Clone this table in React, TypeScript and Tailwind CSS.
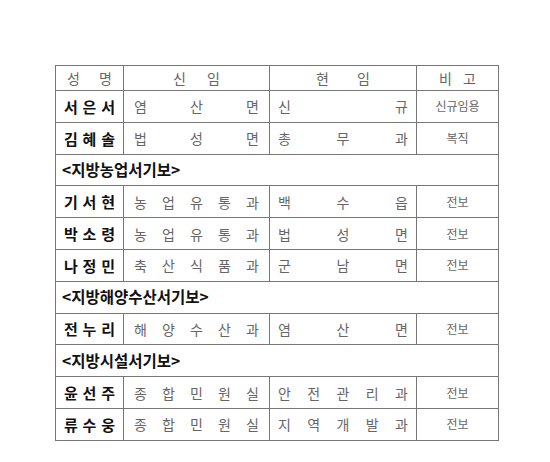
import React from 'react';

type Row =
  | { kind: 'person'; name: string; from: string; to: string; note: string }
  | { kind: 'section'; title: string };

const rows: Row[] = [
  { kind: 'person', name: '서은서', from: '염산면', to: '신규', note: '신규임용' },
  { kind: 'person', name: '김혜솔', from: '법성면', to: '총무과', note: '복직' },
  { kind: 'section', title: '<지방농업서기보>' },
  { kind: 'person', name: '기서현', from: '농업유통과', to: '백수읍', note: '전보' },
  { kind: 'person', name: '박소령', from: '농업유통과', to: '법성면', note: '전보' },
  { kind: 'person', name: '나정민', from: '축산식품과', to: '군남면', note: '전보' },
  { kind: 'section', title: '<지방해양수산서기보>' },
  { kind: 'person', name: '전누리', from: '해양수산과', to: '염산면', note: '전보' },
  { kind: 'section', title: '<지방시설서기보>' },
  { kind: 'person', name: '윤선주', from: '종합민원실', to: '안전관리과', note: '전보' },
  { kind: 'person', name: '류수웅', from: '종합민원실', to: '지역개발과', note: '전보' },
];

function Spread({ text, className }: { text: string; className: string }) {
  return (
    <div className={`flex justify-between ${className}`}>
      {Array.from(text).map((c, i) => (
        <span key={i}>{c}</span>
      ))}
    </div>
  );
}

export default function App() {
  return (
    <div className="w-[550px] h-[462px] bg-white pt-[65px] pl-[55px] font-['Noto_Sans_CJK_KR',sans-serif]">
      <table className="border-collapse border border-[#555] table-fixed w-[443px]">
        <colgroup>
          <col className="w-[68px]" />
          <col className="w-[146px]" />
          <col className="w-[147px]" />
          <col className="w-[82px]" />
        </colgroup>
        <thead>
          <tr className="h-[25px] text-[14px] text-[#666] leading-none">
            <th className="border border-[#777] font-normal">
              <Spread text="성명" className="px-[11px]" />
            </th>
            <th className="border border-[#777] font-normal">
              <Spread text="신임" className="px-[49px]" />
            </th>
            <th className="border border-[#777] font-normal">
              <Spread text="현임" className="px-[46px]" />
            </th>
            <th className="border border-[#777] font-normal">
              <Spread text="비고" className="px-[22px]" />
            </th>
          </tr>
        </thead>
        <tbody>
          {rows.map((r, i) =>
            r.kind === 'section' ? (
              <tr key={i} className="h-[31.8px]">
                <td colSpan={4} className="border border-[#777] pl-[6px] text-[15.5px] font-bold text-[#111] leading-none">
                  {r.title}
                </td>
              </tr>
            ) : (
              <tr key={i} className="h-[31.8px] leading-none">
                <td className="border border-[#777]">
                  <Spread text={r.name} className="px-[8px] text-[15px] font-bold text-[#111]" />
                </td>
                <td className="border border-[#777]">
                  <Spread text={r.from} className="px-[10px] text-[14px] text-[#666]" />
                </td>
                <td className="border border-[#777]">
                  <Spread text={r.to} className="px-[8px] text-[14px] text-[#666]" />
                </td>
                <td className="border border-[#777] text-center text-[12px] text-[#666]">{r.note}</td>
              </tr>
            )
          )}
        </tbody>
      </table>
    </div>
  );
}
